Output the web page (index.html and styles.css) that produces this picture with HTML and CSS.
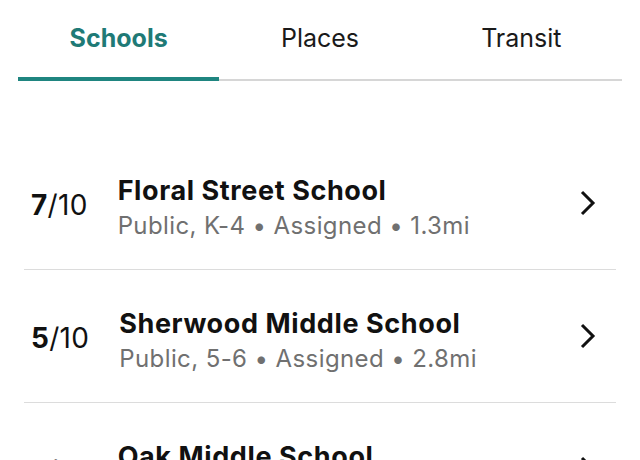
FILE: index.html
```html
<!DOCTYPE html>
<html lang="en">
<head>
  <meta charset="UTF-8">
  <title>Nearby Schools</title>
  <link rel="stylesheet" href="styles.css">
</head>
<body>

<div class="tabs">
  <div class="tab active">Schools</div>
  <div class="tab">Places</div>
  <div class="tab">Transit</div>
</div>

<div class="school-list">
  <div class="school-row">
    <div class="score"><b>7</b>/10</div>
    <div class="school-info">
      <div class="school-name">Floral Street School</div>
      <div class="school-meta">Public, K-4 &bull; Assigned &bull; 1.3mi</div>
    </div>
    <svg class="chevron" width="16" height="26" viewBox="0 0 16 26"><path d="M2 2 L13 13 L2 24" fill="none" stroke="#111" stroke-width="3"/></svg>
  </div>

  <div class="school-row">
    <div class="score"><b>5</b>/10</div>
    <div class="school-info">
      <div class="school-name">Sherwood Middle School</div>
      <div class="school-meta">Public, 5-6 &bull; Assigned &bull; 2.8mi</div>
    </div>
    <svg class="chevron" width="16" height="26" viewBox="0 0 16 26"><path d="M2 2 L13 13 L2 24" fill="none" stroke="#111" stroke-width="3"/></svg>
  </div>

  <div class="school-row">
    <div class="score"><b>7</b>/10</div>
    <div class="school-info">
      <div class="school-name">Oak Middle School</div>
      <div class="school-meta">Public, 7-8 &bull; Assigned &bull; 3.1mi</div>
    </div>
    <svg class="chevron" width="16" height="26" viewBox="0 0 16 26"><path d="M2 2 L13 13 L2 24" fill="none" stroke="#111" stroke-width="3"/></svg>
  </div>
</div>

</body>
</html>
```

FILE: styles.css
```css
body {
  margin: 0;
  font-family: Inter, "Noto Sans", sans-serif;
  background-color: #fff;
  color: #111;
  overflow: hidden;
}
.tabs {
  display: grid;
  grid-template-columns: 1fr 1fr 1fr;
  margin: 0 18px;
  border-bottom: 2px solid #d6d6d6;
}
.tab {
  text-align: center;
  font-size: 25px;
  line-height: 30px;
  padding: 23px 0 24px;
  border-bottom: 4px solid transparent;
  margin-bottom: -2px;
  color: #1a1a1a;
}
.tab.active {
  color: #1f7a76;
  font-weight: 700;
  border-bottom-color: #1f8580;
}
.school-list {
  margin-top: 56px;
}
.school-row {
  display: flex;
  align-items: center;
  gap: 30px;
  height: 132px;
  margin: 0 24px;
  padding: 0 20px 0 7px;
  border-bottom: 1px solid #dcdcdc;
}
.score {
  font-size: 28px;
  letter-spacing: 0.3px;
  padding-top: 4px;
}
.score b {
  font-weight: 700;
}
.school-info {
  flex: 1;
  padding-top: 11px;
}
.school-name {
  font-size: 27px;
  font-weight: 700;
  line-height: 34px;
  letter-spacing: 0.6px;
}
.school-meta {
  font-size: 24px;
  line-height: 36px;
  letter-spacing: 0.4px;
  color: #707070;
}
.chevron {
  flex-shrink: 0;
}
```
